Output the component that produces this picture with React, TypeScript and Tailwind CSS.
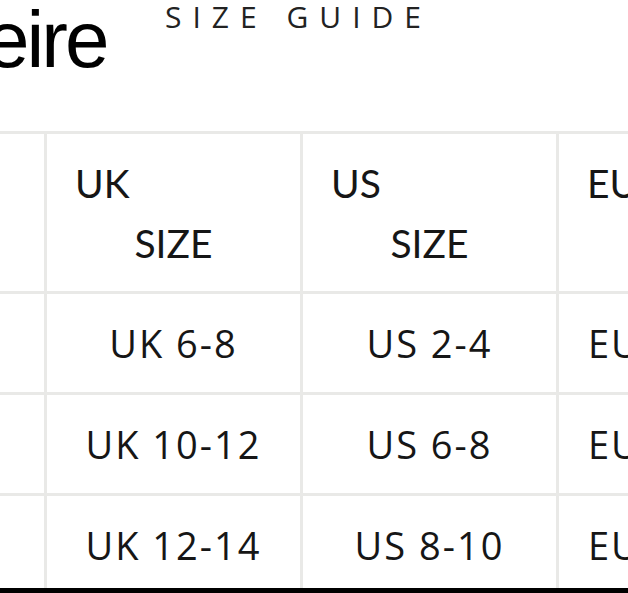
import React from "react";

const rows = [
  ["", "UK 6-8", "US 2-4", "EU 34-36"],
  ["", "UK 10-12", "US 6-8", "EU 38-40"],
  ["", "UK 12-14", "US 8-10", "EU 40-42"],
];

function HeaderCell({ first }: { first: string }) {
  return (
    <div className="bg-white h-[157px] flex flex-col justify-center text-[#161616] text-[39px] leading-[60px] [font-family:Lato,'Noto_Sans',sans-serif]">
      <div className="pl-[28px] text-left">{first}</div>
      <div className="text-center">SIZE</div>
    </div>
  );
}

function BodyCell({ text, left }: { text: string; left?: boolean }) {
  return (
    <div
      className={
        left
          ? "bg-white h-[98px] flex items-center justify-start pl-[29px] text-[#161616] text-[38px] leading-none tracking-[2px] [font-family:'Open_Sans','Noto_Sans',sans-serif] whitespace-nowrap"
          : "bg-white h-[98px] flex items-center justify-center text-[#161616] text-[38px] leading-none tracking-[2px] [font-family:'Open_Sans','Noto_Sans',sans-serif] whitespace-nowrap"
      }
    >
      {text}
    </div>
  );
}

export default function App() {
  return (
    <div className="w-[628px] h-[593px] overflow-hidden bg-white flex flex-col">
      <div className="h-[131px] shrink-0 flex items-start">
        <div className="w-[165px] shrink-0">
          <div className="ml-[-15px] text-black text-[80px] leading-none tracking-[-3px] [font-family:'Liberation_Sans',Arial,sans-serif]">
            eire
          </div>
        </div>
        <div className="mt-[2px] text-[#222] text-[30px] leading-none font-normal tracking-[11px] [font-family:'Open_Sans','Noto_Sans',sans-serif] whitespace-nowrap">
          SIZE GUIDE
        </div>
      </div>
      <div className="flex-1 overflow-hidden">
        <div className="ml-[-212px] w-max grid grid-cols-[253px_253px_253px_253px] gap-[3px] bg-[#e9e9e7] p-[3px]">
          <div className="bg-white h-[157px]" />
          <HeaderCell first="UK" />
          <HeaderCell first="US" />
          <HeaderCell first="EU" />
          {rows.map((r, i) => (
            <React.Fragment key={i}>
              {r.map((c, j) => (
                <BodyCell key={j} text={c} left={j === 3} />
              ))}
            </React.Fragment>
          ))}
        </div>
      </div>
      <div className="h-[5px] shrink-0 bg-black" />
    </div>
  );
}
